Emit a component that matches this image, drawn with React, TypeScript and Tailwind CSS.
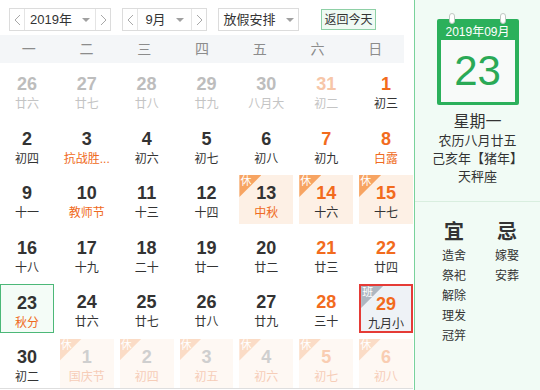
import { clsx } from "clsx";

type Day = {
  d: number;
  l: string;
  other?: boolean; // not this month
  weekend?: boolean;
  fest?: boolean;
  rest?: boolean; // 休
  work?: boolean; // 班
  today?: boolean;
  picked?: boolean;
};

const weekdays = ["一", "二", "三", "四", "五", "六", "日"];

const days: Day[] = [
  { d: 26, l: "廿六", other: true },
  { d: 27, l: "廿七", other: true },
  { d: 28, l: "廿八", other: true },
  { d: 29, l: "廿九", other: true },
  { d: 30, l: "八月大", other: true },
  { d: 31, l: "初二", other: true, weekend: true },
  { d: 1, l: "初三", weekend: true },
  { d: 2, l: "初四" },
  { d: 3, l: "抗战胜...", fest: true },
  { d: 4, l: "初六" },
  { d: 5, l: "初七" },
  { d: 6, l: "初八" },
  { d: 7, l: "初九", weekend: true },
  { d: 8, l: "白露", weekend: true, fest: true },
  { d: 9, l: "十一" },
  { d: 10, l: "教师节", fest: true },
  { d: 11, l: "十三" },
  { d: 12, l: "十四" },
  { d: 13, l: "中秋", fest: true, rest: true },
  { d: 14, l: "十六", weekend: true, rest: true },
  { d: 15, l: "十七", weekend: true, rest: true },
  { d: 16, l: "十八" },
  { d: 17, l: "十九" },
  { d: 18, l: "二十" },
  { d: 19, l: "廿一" },
  { d: 20, l: "廿二" },
  { d: 21, l: "廿三", weekend: true },
  { d: 22, l: "廿四", weekend: true },
  { d: 23, l: "秋分", fest: true, today: true },
  { d: 24, l: "廿六" },
  { d: 25, l: "廿七" },
  { d: 26, l: "廿八" },
  { d: 27, l: "廿九" },
  { d: 28, l: "三十", weekend: true },
  { d: 29, l: "九月小", weekend: true, work: true, picked: true },
  { d: 30, l: "初二" },
  { d: 1, l: "国庆节", other: true, rest: true, fest: true },
  { d: 2, l: "初四", other: true, rest: true },
  { d: 3, l: "初五", other: true, rest: true },
  { d: 4, l: "初六", other: true, rest: true },
  { d: 5, l: "初七", other: true, rest: true, weekend: true },
  { d: 6, l: "初八", other: true, rest: true, weekend: true },
];

const yi = ["造舍", "祭祀", "解除", "理发", "冠笄"];
const ji = ["嫁娶", "安葬"];

function Chevron({ dir }: { dir: "l" | "r" }) {
  return (
    <svg width="7" height="12" viewBox="0 0 7 12" fill="none">
      <polyline
        points={dir === "l" ? "6,1 1,6 6,11" : "1,1 6,6 1,11"}
        stroke="#a8a8a8"
        strokeWidth="1"
      />
    </svg>
  );
}

function Caret() {
  return <span className="ml-[10px] h-0 w-0 border-x-[4px] border-t-[4px] border-x-transparent border-t-[#a0a0a0]" />;
}

function Picker({ label, mid }: { label: string; mid: string }) {
  return (
    <div className="flex h-[23px] border border-[#dcdcdc] bg-white">
      <div className="flex w-[15px] items-center justify-center border-r border-[#e4e4e4]">
        <Chevron dir="l" />
      </div>
      <div className={clsx("flex items-center justify-center text-[13px] text-[#333]", mid)}>
        {label}
        <Caret />
      </div>
      <div className="flex w-[15px] items-center justify-center border-l border-[#e4e4e4]">
        <Chevron dir="r" />
      </div>
    </div>
  );
}

function Cell({ day }: { day: Day }) {
  const numColor = day.other
    ? day.weekend
      ? day.rest
        ? "text-[#f9cdb2]"
        : "text-[#f7c6a8]"
      : day.rest
        ? "text-[#cfcfcf]"
        : "text-[#bdbdbd]"
    : day.weekend
      ? "text-[#f26b1d]"
      : "text-[#333]";
  const lunarColor = day.other
    ? day.rest
      ? "text-[#f6cdb8]"
      : "text-[#c4c4c4]"
    : day.fest
      ? "text-[#ef6a22]"
      : "text-[#333]";

  return (
    <div
      className={clsx(
        "relative flex h-[49px] flex-col items-center pt-[7px]",
        day.rest && !day.other && "bg-[#fdf0e5]",
        day.rest && day.other && "bg-[#fef8f3]",
        day.today && "border border-[#4cb878] bg-[#f4fcf7] pt-[6px]",
        day.picked && "border-2 border-[#e53b36] bg-[#eef2f6] pt-[5px]",
      )}
    >
      {(day.rest || day.work) && (
        <div
          className={clsx(
            "absolute left-0 top-0 h-[22px] w-[22px] [clip-path:polygon(0_0,100%_0,0_100%)]",
            day.work ? "bg-[#aeb7c1]" : day.other ? "bg-[#fbdcc6]" : "bg-[#f7a462]",
          )}
        >
          <span className="absolute left-[1px] top-[-1px] text-[11px] leading-[14px] text-white">
            {day.work ? "班" : "休"}
          </span>
        </div>
      )}
      <span className={clsx("relative text-[18px] font-bold leading-[22px]", numColor)}>{day.d}</span>
      <span className={clsx("mt-[1px] whitespace-nowrap text-[12px] leading-[16px]", lunarColor)}>
        {day.l}
      </span>
    </div>
  );
}

export default function App() {
  return (
    <div className="flex h-[390px] w-[540px] overflow-hidden bg-white font-['Liberation_Sans','Noto_Sans_CJK_SC',sans-serif]">
      <div className="flex w-[414px] flex-col">
        <div className="flex h-[35px] items-start gap-[11px] pl-[9px] pt-[8px]">
          <Picker label="2019年" mid="w-[70px]" />
          <Picker label="9月" mid="w-[53px]" />
          <div className="flex h-[23px] w-[81px] items-center justify-center border border-[#dcdcdc] text-[13px] text-[#333]">
            放假安排
            <Caret />
          </div>
          <div className="ml-[11px] mt-[1px] flex h-[21px] w-[55px] items-center justify-center border border-[#8ed0a6] bg-[#effaf3] text-[12px] text-[#333]">
            返回今天
          </div>
        </div>
        <div className="grid h-[28px] w-[404px] grid-cols-7 items-center bg-[#f4f6f8] text-center text-[14px] text-[#8c8c8c]">
          {weekdays.map((w) => (
            <span key={w}>{w}</span>
          ))}
        </div>
        <div className="grid w-[413px] grid-cols-7 gap-x-[6px] gap-y-[5.5px] border-b border-[#dedede] pt-[3px]">
          {days.map((day, i) => (
            <Cell key={i} day={day} />
          ))}
        </div>
      </div>

      <aside className="flex flex-1 flex-col border-l border-[#79d29b] bg-[#f1fbf5]">
        <div className="flex h-[202px] flex-col items-center border-b border-[#d9eedf]">
          <div className="relative mt-[19px] w-[82px] rounded-[2px] bg-[#2bb05b] px-[4px] pb-[3px]">
            <span className="absolute left-[12px] top-[-6px] h-[11px] w-[6px] rounded-full border border-[#bfc8c2] bg-white" />
            <span className="absolute right-[13px] top-[-6px] h-[11px] w-[6px] rounded-full border border-[#bfc8c2] bg-white" />
            <div className="flex h-[21px] items-end justify-center pb-[1px] text-[12px] leading-[14px] text-white">
              2019年09月
            </div>
            <div className="flex h-[62px] items-center justify-center bg-[#f8faf9] text-[42px] leading-none text-[#2aa956]">
              23
            </div>
          </div>
          <div className="mt-[7px] text-[16px] leading-[20px] text-[#333]">星期一</div>
          <div className="text-[13px] leading-[18px] text-[#333]">农历八月廿五</div>
          <div className="text-[13px] leading-[18px] text-[#333]">己亥年【猪年】</div>
          <div className="text-[13px] leading-[18px] text-[#333]">天秤座</div>
        </div>
        <div className="mt-[18px] flex gap-[25px] pl-[25px]">
          {[
            { title: "宜", items: yi },
            { title: "忌", items: ji },
          ].map((col) => (
            <div key={col.title} className="flex w-[28px] flex-col items-center">
              <span className="mb-[2px] text-[20px] font-bold leading-[24px] text-[#333]">{col.title}</span>
              {col.items.map((it) => (
                <span key={it} className="text-[12px] leading-[20px] text-[#333]">
                  {it}
                </span>
              ))}
            </div>
          ))}
        </div>
      </aside>
    </div>
  );
}
